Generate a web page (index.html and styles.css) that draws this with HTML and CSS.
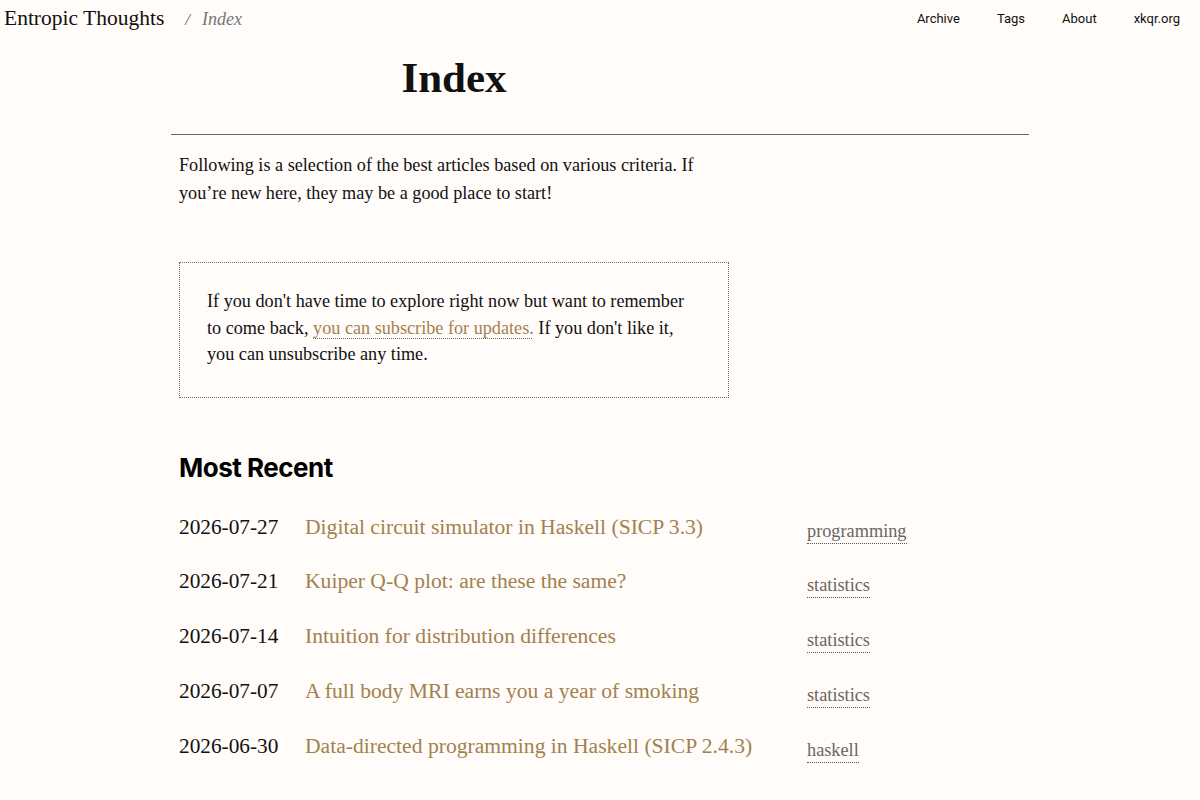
FILE: index.html
```html
<!DOCTYPE html>
<html lang="en">
<head>
<meta charset="utf-8">
<title>Index – Entropic Thoughts</title>
<link rel="stylesheet" href="styles.css">
</head>
<body>
<header class="topbar">
  <div class="crumbs">
    <a class="site" href="#">Entropic Thoughts</a>
    <span class="sep">/</span>
    <span class="here">Index</span>
  </div>
  <nav class="nav">
    <a href="#">Archive</a>
    <a href="#">Tags</a>
    <a href="#">About</a>
    <a href="#">xkqr.org</a>
  </nav>
</header>
<main class="page">
  <div class="titlebox"><h1 class="title">Index</h1></div>
  <hr class="rule">
  <div class="content">
    <p class="intro">Following is a selection of the best articles based on various criteria. If you’re new here, they may be a good place to start!</p>
    <div class="subscribe">
      <p>If you don't have time to explore right now but want to remember to come back, <a class="link" href="#">you can subscribe for updates.</a> If you don't like it, you can unsubscribe any time.</p>
    </div>
    <h2 class="section">Most Recent</h2>
    <div class="list">
      <div class="row"><span class="date">2026-07-27</span><a class="post" href="#">Digital circuit simulator in Haskell (SICP 3.3)</a><span class="tagcell"><a class="tag" href="#">programming</a></span></div>
      <div class="row"><span class="date">2026-07-21</span><a class="post" href="#">Kuiper Q-Q plot: are these the same?</a><span class="tagcell"><a class="tag" href="#">statistics</a></span></div>
      <div class="row"><span class="date">2026-07-14</span><a class="post" href="#">Intuition for distribution differences</a><span class="tagcell"><a class="tag" href="#">statistics</a></span></div>
      <div class="row"><span class="date">2026-07-07</span><a class="post" href="#">A full body MRI earns you a year of smoking</a><span class="tagcell"><a class="tag" href="#">statistics</a></span></div>
      <div class="row"><span class="date">2026-06-30</span><a class="post" href="#">Data-directed programming in Haskell (SICP 2.4.3)</a><span class="tagcell"><a class="tag" href="#">haskell</a></span></div>
    </div>
  </div>
</main>
</body>
</html>
```
FILE: styles.css
```css
html, body {
  margin: 0;
  padding: 0;
  background: #fffcf9;
  color: #111;
  font-family: "Liberation Serif", "DejaVu Serif", serif;
}
a { text-decoration: none; color: inherit; }

.topbar {
  display: flex;
  justify-content: space-between;
  align-items: center;
  height: 36px;
  padding: 0 20px 0 4px;
}
.crumbs {
  display: flex;
  align-items: baseline;
  font-size: 21.5px;
  color: #111;
}
.sep {
  margin: 0 12px 0 21px;
  font-size: 17px;
  color: #666;
  font-style: italic;
}
.here {
  font-size: 18px;
  font-style: italic;
  color: #777;
}
.nav {
  display: flex;
  gap: 37px;
  font-family: Roboto, "Liberation Sans", sans-serif;
  font-size: 13px;
  color: #111;
}

.page {
  width: 858px;
  margin: 0 auto;
}
.titlebox {
  width: 550px;
  padding-left: 8px;
}
.title {
  margin: 0;
  padding: 17px 0 0;
  text-align: center;
  font-size: 43px;
  line-height: 50px;
  font-weight: bold;
}
.rule {
  margin: 31px 0 0;
  border: 0;
  border-top: 1px solid #6e6660;
  height: 0;
}
.content {
  padding-left: 8px;
}
.intro {
  width: 530px;
  margin: 16px 0 0;
  font-size: 18.2px;
  line-height: 28px;
}
.subscribe {
  width: 494px;
  margin-top: 55px;
  padding: 25px 27px 29px;
  border: 1px dotted #7a6a50;
}
.subscribe p {
  margin: 0;
  font-size: 18.2px;
  line-height: 26.5px;
}
.link {
  color: #a2814f;
  text-decoration: underline dotted #7a6a50;
  text-decoration-thickness: 1px;
  text-underline-offset: 4px;
}
.section {
  margin: 52px 0 0;
  font-family: Inter, "Liberation Sans", sans-serif;
  font-size: 26px;
  line-height: 36px;
  font-weight: 700;
  letter-spacing: -0.5px;
  color: #000;
}
.list {
  margin-top: 29px;
}
.row {
  display: grid;
  grid-template-columns: 126px 502px auto;
  align-items: baseline;
  height: 54.8px;
}
.date {
  font-size: 21.3px;
  color: #111;
}
.post {
  font-size: 21.6px;
  color: #a2814f;
}
.tagcell {
  position: relative;
  top: 3px;
}
.tag {
  font-size: 18.3px;
  color: #6b6661;
  border-bottom: 1px dotted #555;
  padding-bottom: 2px;
}
```
